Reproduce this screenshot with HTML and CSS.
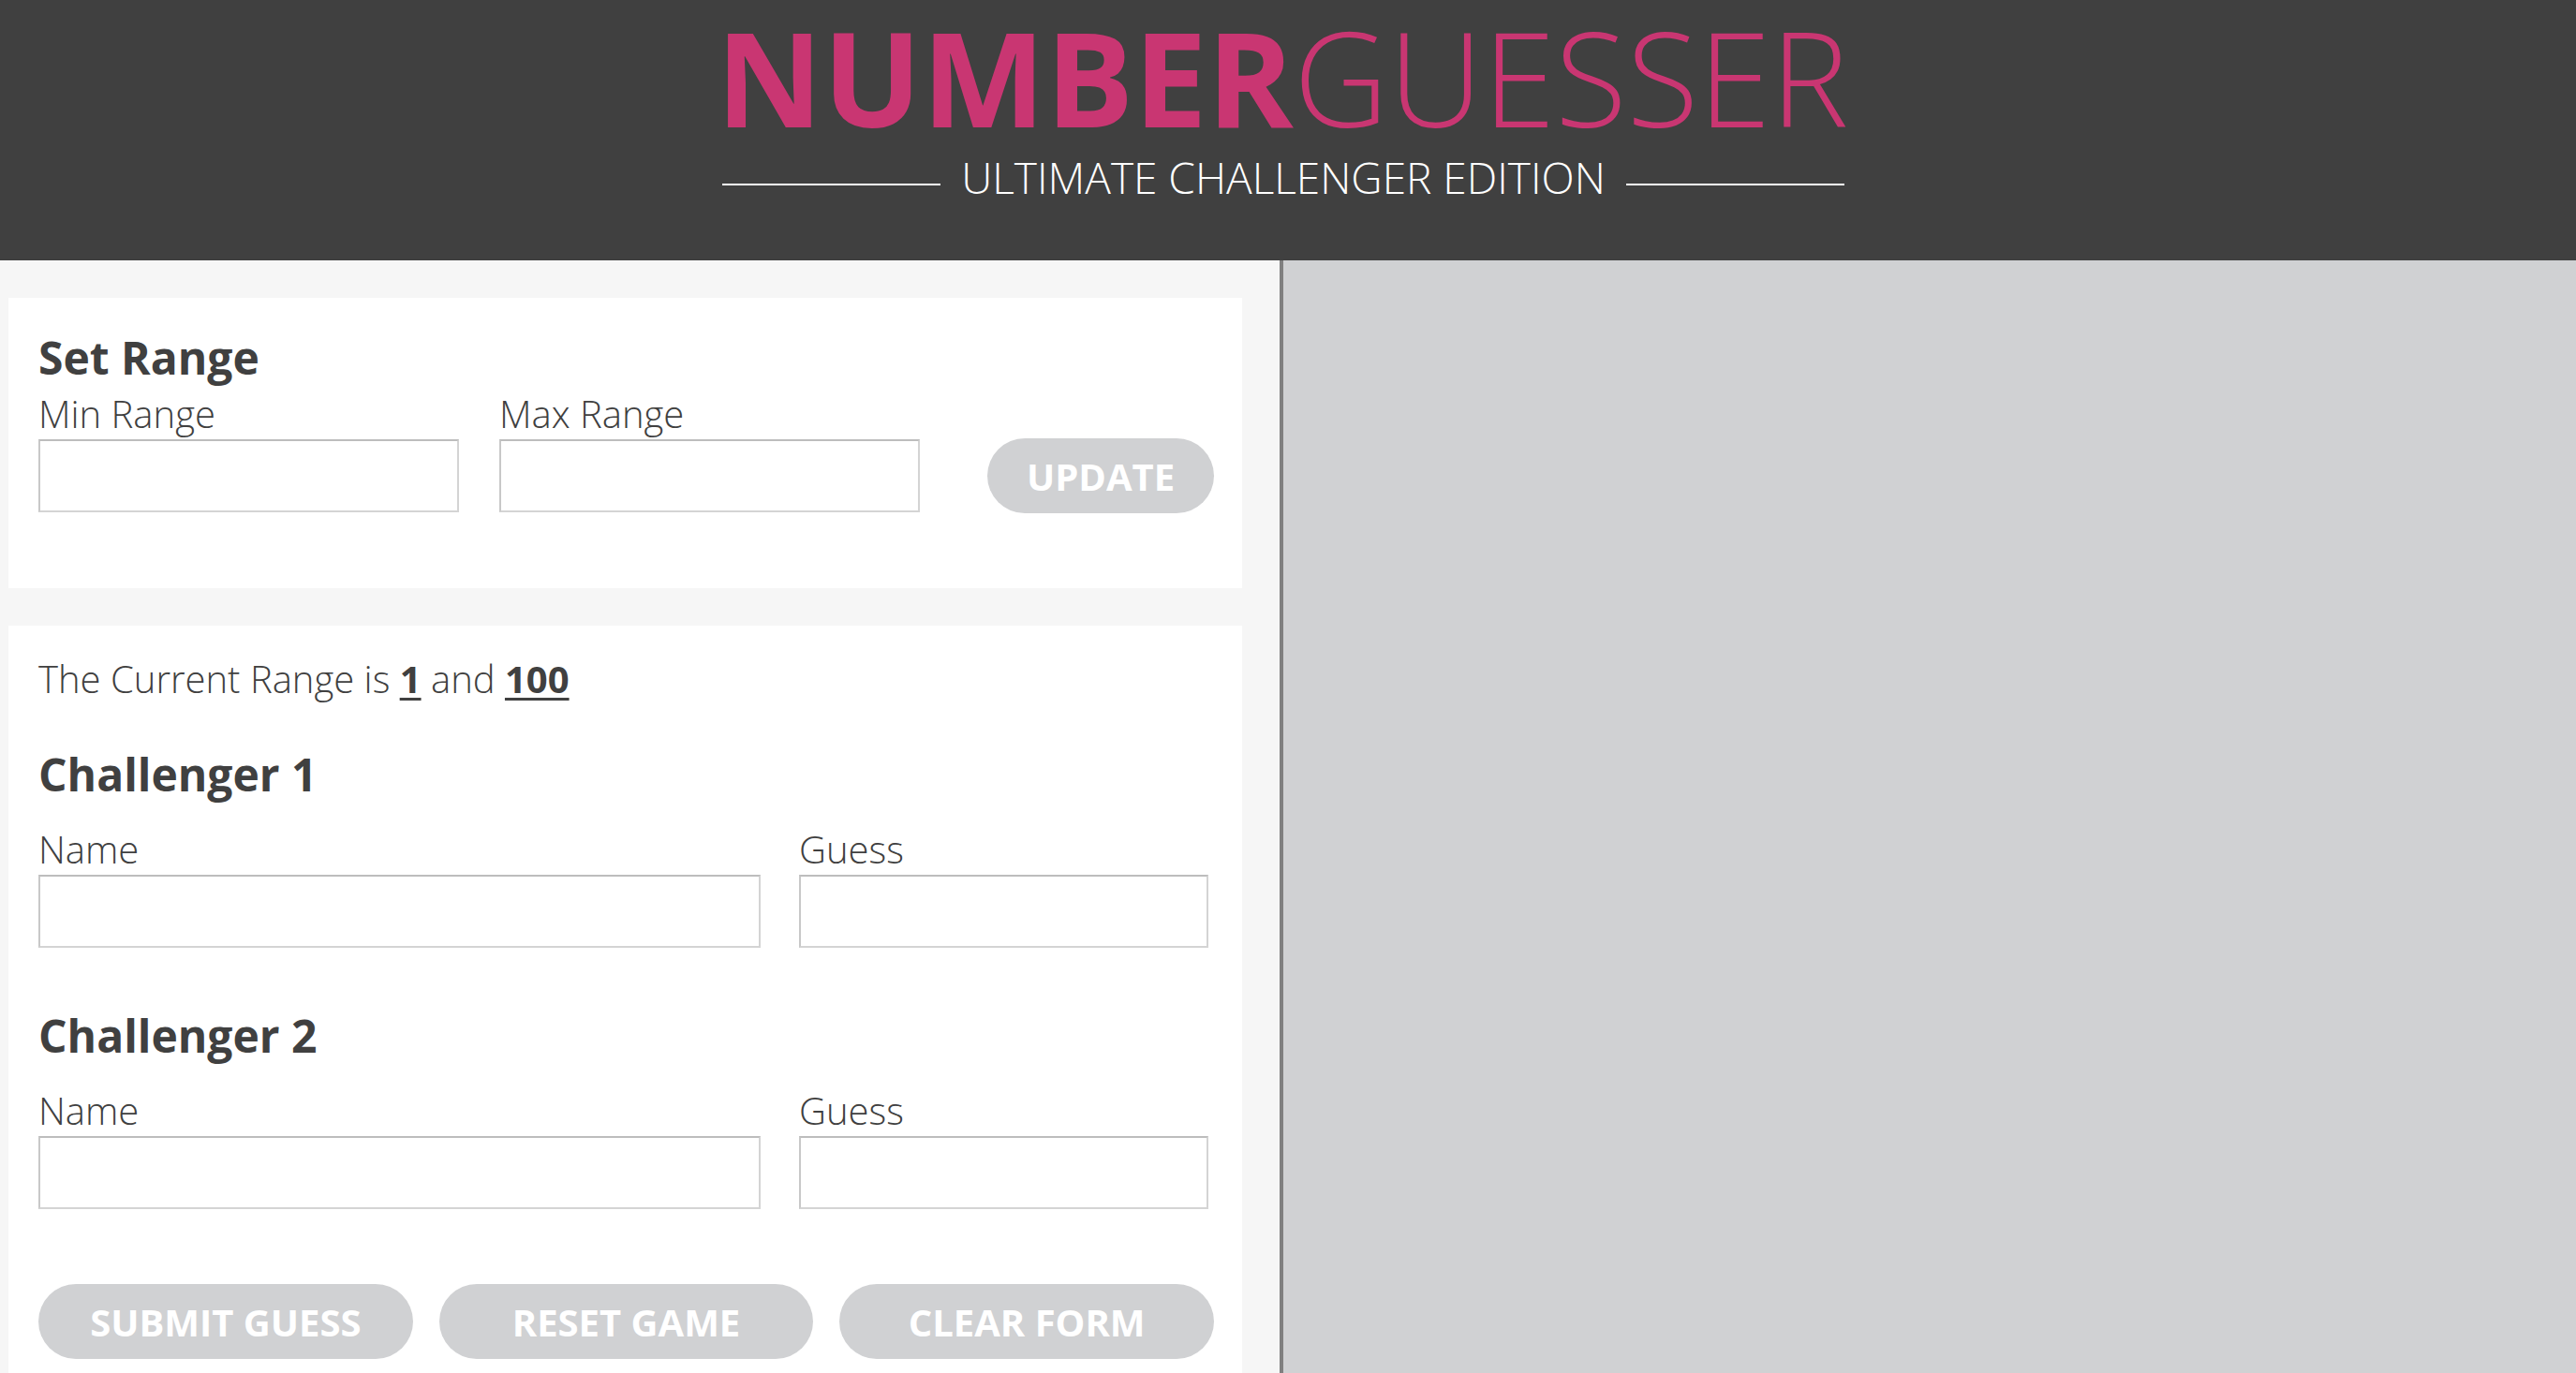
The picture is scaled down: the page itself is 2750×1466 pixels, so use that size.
FILE: index.html
```html
<!DOCTYPE html>
<html lang="en">
<head>
<meta charset="utf-8">
<title>Number Guesser</title>
<link rel="stylesheet" href="styles.css">
</head>
<body>
<header class="site-header">
  <div class="brand">
    <h1 class="title"><span class="title-bold">NUMBER</span><span class="title-light">GUESSER</span></h1>
    <div class="subtitle-row">
      <span class="rule"></span>
      <span class="subtitle">ULTIMATE CHALLENGER EDITION</span>
      <span class="rule"></span>
    </div>
  </div>
</header>
<main class="layout">
  <section class="left-panel">
    <form class="card range-card">
      <h2 class="card-heading">Set Range</h2>
      <div class="range-row">
        <div class="field field-range">
          <label class="field-label" for="min">Min Range</label>
          <input class="text-input" id="min" type="text">
        </div>
        <div class="field field-range">
          <label class="field-label" for="max">Max Range</label>
          <input class="text-input" id="max" type="text">
        </div>
        <button class="pill-btn update-btn" type="button">UPDATE</button>
      </div>
    </form>
    <form class="card game-card">
      <p class="current-range">The Current Range is <strong class="range-num">1</strong> and <strong class="range-num">100</strong></p>
      <h2 class="card-heading challenger-heading">Challenger 1</h2>
      <div class="challenger-row">
        <div class="field field-name">
          <label class="field-label" for="n1">Name</label>
          <input class="text-input" id="n1" type="text">
        </div>
        <div class="field field-guess">
          <label class="field-label" for="g1">Guess</label>
          <input class="text-input" id="g1" type="text">
        </div>
      </div>
      <h2 class="card-heading challenger-heading second">Challenger 2</h2>
      <div class="challenger-row">
        <div class="field field-name">
          <label class="field-label" for="n2">Name</label>
          <input class="text-input" id="n2" type="text">
        </div>
        <div class="field field-guess">
          <label class="field-label" for="g2">Guess</label>
          <input class="text-input" id="g2" type="text">
        </div>
      </div>
      <div class="action-row">
        <button class="pill-btn action-btn" type="button">SUBMIT GUESS</button>
        <button class="pill-btn action-btn" type="button">RESET GAME</button>
        <button class="pill-btn action-btn" type="button">CLEAR FORM</button>
      </div>
    </form>
  </section>
  <section class="right-panel"></section>
</main>
</body>
</html>
```
FILE: styles.css
```css
* {
  box-sizing: border-box;
}

html, body {
  margin: 0;
  padding: 0;
}

body {
  font-family: "Open Sans", "Noto Sans", "Liberation Sans", sans-serif;
  color: #404040;
  background: #d0d1d3;
}

.site-header {
  height: 278px;
  background: #404040;
  display: flex;
  justify-content: center;
  padding-top: 2px;
  padding-right: 12px;
}

.brand {
  display: flex;
  flex-direction: column;
  align-items: stretch;
}

.title {
  margin: 0;
  font-size: 140px;
  line-height: 160px;
  color: #c93672;
  letter-spacing: 0;
  white-space: nowrap;
}

.title-bold {
  font-weight: 700;
}

.title-light {
  font-weight: 300;
}

.subtitle-row {
  margin-top: 4px;
  padding: 0 5px 0 7px;
  display: flex;
  align-items: center;
  gap: 22px;
}

.rule {
  flex: 1;
  height: 2px;
  margin-top: 15px;
  background: #ffffff;
}

.subtitle {
  font-size: 46px;
  line-height: 46px;
  font-weight: 300;
  color: #ffffff;
  white-space: nowrap;
}

.layout {
  display: flex;
  align-items: stretch;
}

.left-panel {
  width: 1370px;
  flex: none;
  background: #f6f6f6;
  border-right: 4px solid #808080;
  padding: 40px 40px 0 9px;
}

.right-panel {
  flex: 1;
  background: #d0d1d3;
}

.card {
  background: #ffffff;
  padding: 33px 30px 0 32px;
}

.range-card {
  padding-top: 36px;
  padding-bottom: 81px;
  margin-bottom: 40px;
}

.game-card {
  padding-bottom: 40px;
}

.card-heading {
  margin: 0;
  font-size: 48px;
  line-height: 56px;
  font-weight: 700;
  color: #404040;
}

.field {
  display: flex;
  flex-direction: column;
}

.field-label {
  font-size: 40px;
  line-height: 48px;
  font-weight: 300;
  color: #404040;
  margin-bottom: 3px;
}

.text-input {
  height: 78px;
  border: 2px solid #d4d4d4;
  border-top-color: #bdbdbd;
  border-left-color: #c8c8c8;
  background: #ffffff;
  font-family: inherit;
  font-size: 36px;
  padding: 0 12px;
  outline: none;
}

.range-row {
  margin-top: 8px;
  display: flex;
  align-items: flex-end;
  gap: 43px;
}

.field-range {
  width: 449px;
}

.pill-btn {
  height: 80px;
  border: none;
  border-radius: 40px;
  background: #d0d1d3;
  color: #ffffff;
  font-family: inherit;
  font-size: 40px;
  font-weight: 700;
  padding: 0;
  cursor: pointer;
}

.update-btn {
  width: 242px;
  margin-left: auto;
  margin-bottom: -1px;
}

.current-range {
  margin: 0;
  font-size: 40px;
  line-height: 48px;
  font-weight: 300;
}

.range-num {
  font-weight: 700;
  text-decoration: underline;
  text-decoration-thickness: 3px;
  text-underline-offset: 5px;
}

.challenger-heading {
  margin-top: 50px;
}

.challenger-heading.second {
  margin-top: 66px;
}

.challenger-row {
  margin-top: 28px;
  display: flex;
  gap: 41px;
}

.field-name {
  width: 771px;
}

.field-guess {
  width: 437px;
}

.action-row {
  margin-top: 80px;
  display: flex;
  gap: 28px;
}

.action-btn {
  flex: 1;
}
```
